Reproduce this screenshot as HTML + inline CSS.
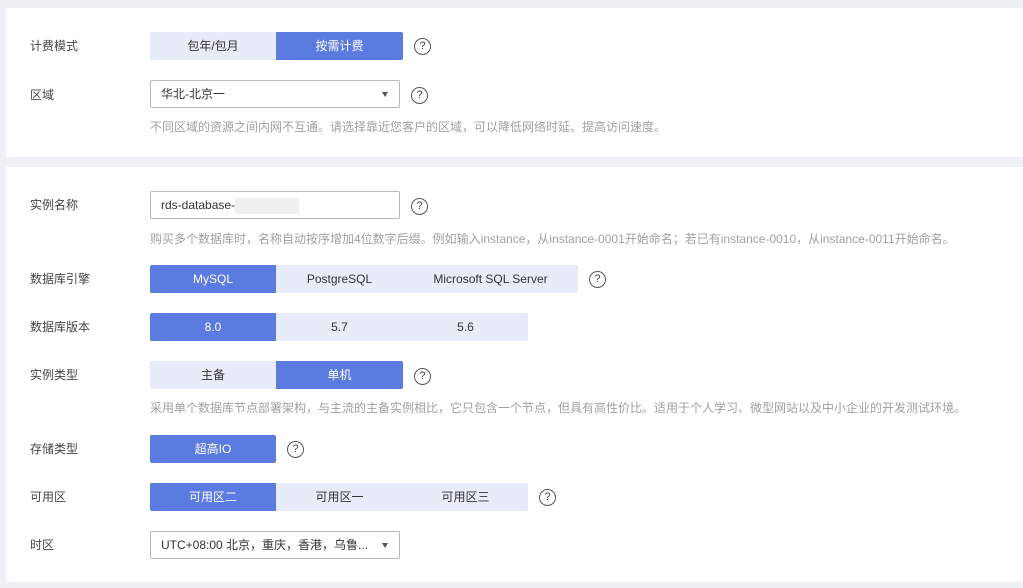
<!DOCTYPE html>
<html><head><meta charset="utf-8"><style>
body{margin:0;width:1023px;height:588px;background:#eff0f4;font-family:"Liberation Sans","Noto Sans CJK SC",sans-serif;font-size:12px;color:#333;position:relative;overflow:hidden}
.card{position:absolute;left:6px;right:0;background:#fff}
.lbl{position:absolute;left:30px;line-height:14px;color:#444}
.seg{position:absolute;height:28px;display:flex;border-radius:2px;overflow:hidden}
.seg div{height:28px;line-height:28px;text-align:center;background:#e8ecf8;color:#333}
.seg div.on{background:#5b7be0;color:#fff}
.sel{position:absolute;left:150px;height:26px;border:1px solid #b8b8b8;border-radius:2px;background:#fff;line-height:26px;padding-left:10px;box-sizing:content-box}
.sel .ar{position:absolute;right:11px;top:11px;width:0;height:0;border-left:3.5px solid transparent;border-right:3.5px solid transparent;border-top:5px solid #555}
.q{position:absolute;width:15px;height:15px;border:1.4px solid #555;border-radius:50%;text-align:center;line-height:15px;font-size:11px;color:#444}
.hint{position:absolute;left:150px;color:#a0a0a0;line-height:14px}
</style></head><body>
<div class="card" style="top:8px;height:149px"></div>
<div class="card" style="top:167px;height:415px"></div>

<div class="lbl" style="top:39px">计费模式</div>
<div class="seg" style="left:150px;top:32px"><div style="width:126px">包年/包月</div><div class="on" style="width:127px">按需计费</div></div>
<div class="q" style="left:414px;top:38px">?</div>

<div class="lbl" style="top:88px">区域</div>
<div class="sel" style="top:80px;width:238px">华北-北京一<span class="ar"></span></div>
<div class="q" style="left:411px;top:87px">?</div>
<div class="hint" style="top:120px">不同区域的资源之间内网不互通。请选择靠近您客户的区域，可以降低网络时延、提高访问速度。</div>

<div class="lbl" style="top:198px">实例名称</div>
<div class="sel" style="top:191px;width:238px">rds-database-<span style="display:inline-block;width:64px;height:16px;background:#f0f0f0;vertical-align:middle"></span></div>
<div class="q" style="left:411px;top:198px">?</div>
<div class="hint" style="top:232px">购买多个数据库时，名称自动按序增加4位数字后缀。例如输入instance，从instance-0001开始命名；若已有instance-0010，从instance-0011开始命名。</div>

<div class="lbl" style="top:272px">数据库引擎</div>
<div class="seg" style="left:150px;top:265px"><div class="on" style="width:126px">MySQL</div><div style="width:127px">PostgreSQL</div><div style="width:175px">Microsoft SQL Server</div></div>
<div class="q" style="left:589px;top:271px">?</div>

<div class="lbl" style="top:320px">数据库版本</div>
<div class="seg" style="left:150px;top:313px"><div class="on" style="width:126px">8.0</div><div style="width:127px">5.7</div><div style="width:125px">5.6</div></div>

<div class="lbl" style="top:368px">实例类型</div>
<div class="seg" style="left:150px;top:361px"><div style="width:126px">主备</div><div class="on" style="width:127px">单机</div></div>
<div class="q" style="left:414px;top:368px">?</div>
<div class="hint" style="top:401px">采用单个数据库节点部署架构，与主流的主备实例相比，它只包含一个节点，但具有高性价比。适用于个人学习、微型网站以及中小企业的开发测试环境。</div>

<div class="lbl" style="top:442px">存储类型</div>
<div class="seg" style="left:150px;top:435px"><div class="on" style="width:126px">超高IO</div></div>
<div class="q" style="left:287px;top:441px">?</div>

<div class="lbl" style="top:490px">可用区</div>
<div class="seg" style="left:150px;top:483px"><div class="on" style="width:126px">可用区二</div><div style="width:127px">可用区一</div><div style="width:125px">可用区三</div></div>
<div class="q" style="left:539px;top:489px">?</div>

<div class="lbl" style="top:538px">时区</div>
<div class="sel" style="top:531px;width:238px">UTC+08:00 北京，重庆，香港，乌鲁...<span class="ar"></span></div>
</body></html>
